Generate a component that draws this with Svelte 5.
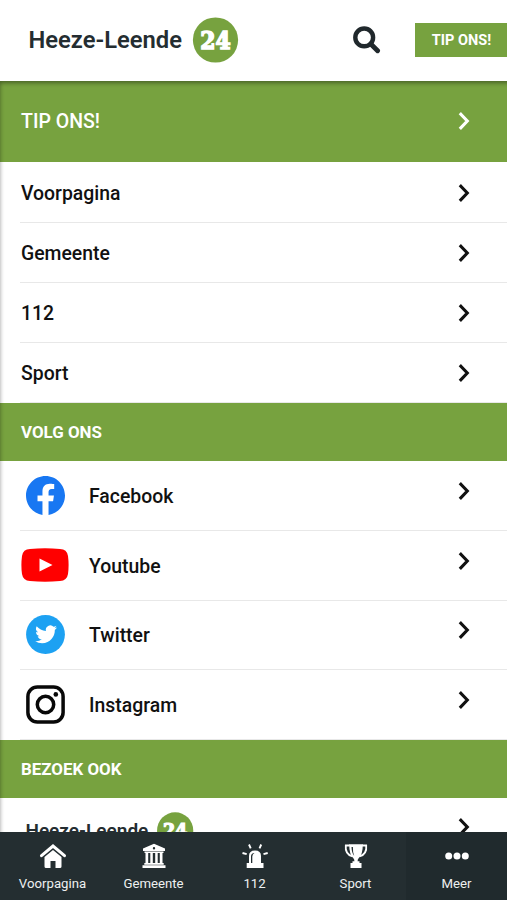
<script>
  const pages = ['Voorpagina', 'Gemeente', '112', 'Sport'];
  const socials = ['Facebook', 'Youtube', 'Twitter', 'Instagram'];
  const tabs = ['Voorpagina', 'Gemeente', '112', 'Sport', 'Meer'];
</script>

{#snippet chevron()}
  <svg class="chevron" width="12" height="18" viewBox="0 0 12 18" aria-hidden="true">
    <path d="m2.9 2.3 6.4 6.7-6.4 6.7" fill="none" stroke="currentColor" stroke-width="3.1" stroke-linecap="square" />
  </svg>
{/snippet}

{#snippet logo(width)}
  <svg class="logo" {width} height={width * 46 / 211} viewBox="0 0 211 46" role="img" aria-label="Heeze-Leende 24">
    <text x="0.5" y="31" textLength="153.5" lengthAdjust="spacingAndGlyphs" font-size="24" font-weight="600" fill="#242d31">Heeze-Leende</text>
    <circle cx="187.5" cy="23" r="22.6" fill="#77a23f" />
    <text class="number" x="172.3" y="31.5" textLength="30.5" lengthAdjust="spacingAndGlyphs" font-size="23.5" font-weight="bold" fill="#fff" stroke="#fff" stroke-width="1.5">24</text>
  </svg>
{/snippet}

<div class="app">
  <header>
    {@render logo(211)}
    <svg class="search" width="28" height="28" viewBox="0 0 28 28" aria-label="Zoeken">
      <circle cx="11.2" cy="11.4" r="8.9" fill="none" stroke="#20282c" stroke-width="4.4" />
      <path d="m17.8 18 6.8 6.8" stroke="#20282c" stroke-width="4.8" stroke-linecap="round" />
    </svg>
    <button>TIP ONS!</button>
  </header>

  <main>
    <div class="tip"><span>TIP ONS!</span>{@render chevron()}</div>
    {#each pages as page}
      <div class="row"><span>{page}</span>{@render chevron()}</div>
    {/each}

    <h2>VOLG ONS</h2>
    {#each socials as social}
      <div class="row social">
        <div class="brand">
          {#if social === 'Facebook'}
            <svg width="39" height="39" viewBox="0 0 24 24"><path fill="#1877f2" d="M24 12.07C24 5.4 18.63 0 12 0S0 5.4 0 12.07c0 6.03 4.39 11.02 10.13 11.93v-8.44H7.08v-3.49h3.05V9.41c0-3.02 1.79-4.69 4.53-4.69 1.31 0 2.69.24 2.69.24v2.97h-1.52c-1.49 0-1.96.93-1.96 1.89v2.25h3.33l-.53 3.49h-2.8V24C19.61 23.09 24 18.1 24 12.07z" /></svg>
          {:else if social === 'Youtube'}
            <svg width="48" height="34" viewBox="0 0 48 34"><path fill="#f00" d="M9 1Q24-.7 39 1q7 .2 8 7 1.2 9 0 18-1 6.5-8 7-15 1.5-30 0-7-.5-8-7-1.2-9 0-18 1-6.8 8-7z" /><path d="m18.5 10.5 13 6.5-13 6.5z" fill="#fff" /></svg>
          {:else if social === 'Twitter'}
            <svg width="39" height="39" viewBox="0 0 39 39"><circle cx="19.5" cy="19.5" r="19.4" fill="#1da1f2" /><path transform="translate(9.2 8.4) scale(.91)" fill="#fff" d="M23.95 4.57a10 10 0 0 1-2.82.78 4.96 4.96 0 0 0 2.16-2.73c-.95.56-2 .96-3.13 1.19a4.92 4.92 0 0 0-8.38 4.48C7.69 8.1 4.07 6.13 1.64 3.16a4.92 4.92 0 0 0 1.52 6.57 4.9 4.9 0 0 1-2.23-.61v.06a4.92 4.92 0 0 0 3.95 4.83 5 5 0 0 1-2.21.08 4.94 4.94 0 0 0 4.6 3.42A9.87 9.87 0 0 1 0 19.54a13.99 13.99 0 0 0 7.55 2.21c9.06 0 14.01-7.5 14.01-13.98 0-.21 0-.42-.02-.63A9.94 9.94 0 0 0 24 4.59z" /></svg>
          {:else}
            <svg width="39" height="39" viewBox="0 0 39 39" fill="none" stroke="#080808" stroke-width="3.5"><rect x="1.9" y="1.9" width="35.2" height="35.2" rx="9.5" /><circle cx="19.5" cy="19.5" r="8.2" /><circle cx="29.8" cy="9.4" r="2.3" fill="#080808" stroke="none" /></svg>
          {/if}
        </div>
        <span>{social}</span>{@render chevron()}
      </div>
    {/each}

    <h2>BEZOEK OOK</h2>
    <div class="row visit">{@render logo(169)}{@render chevron()}</div>
  </main>

  <nav>
    {#each tabs as tab}
      <div class="tab" class:active={tab === 'Meer'}>
        <svg width="28" height="26" viewBox="0 0 28 26" fill="#fff" aria-hidden="true">
          {#if tab === 'Voorpagina'}
            <path d="M2.5 12.7 14 3l11.5 9.7" fill="none" stroke="#fff" stroke-width="3" stroke-linecap="round" stroke-linejoin="miter" />
            <path d="m14 7 8.500 7v9.500q0 1.500-1.500 1.500h-4.500v-7h-5v7H7q-1.500 0-1.500-1.500V14z" />
          {:else if tab === 'Gemeente'}
            <path fill-rule="evenodd" d="M14 .8 25 5.500V8H3V5.500zm0 3.200a1.2 1.2 0 1 0 0 2.4A1.2 1.2 0 0 0 14 4z" />
            <path d="M4.500 8.500h19V10h-19zM5.500 9.500h2.700v11H5.500zm4.800 0h2.500v11h-2.500zm4.900 0h2.500v11h-2.500zm4.600 0h2.700v11h-2.700zM4.300 20h19.400v1.700H4.300zM2.500 22.300h23V25h-23z" />
          {:else if tab === '112'}
            <path fill-rule="evenodd" d="M8 20v-7q0-5.500 6-5.500t6 5.500v7zm2 0h1.300v-6.500q0-2.600 2.200-3.600-3.500 0-3.500 3.600z" />
            <path d="M5.700 20h16.800v5H5.700z" />
            <path d="m8 1.500 1.700 3.800m10.500-3.800-1.700 3.800M1.500 10l4.200 1.200M26.700 10l-4.200 1.200" fill="none" stroke="#fff" stroke-width="1.9" />
          {:else if tab === 'Sport'}
            <path fill-rule="evenodd" d="M7.200 1.300h13.600q0 10.500-4 13.800-1.300 1-1.300 3.800h-3q0-2.800-1.300-3.800-4-3.300-4-13.800zM9.500 4q.2 6 2.700 9-1.500-4-1.300-9z" />
            <path d="M10.500 18.300h7v2.500h-7zM8.500 20h11v5h-11z" />
            <path d="M8 2.500H3.800Q2.800 11 10.500 13.500M20 2.500h4.200q1 8.500-6.700 11" fill="none" stroke="#fff" stroke-width="1.8" />
          {:else}
            <circle cx="5.7" cy="13" r="3.5" /><circle cx="14" cy="13" r="3.5" /><circle cx="22.3" cy="13" r="3.5" />
          {/if}
        </svg>
        <span>{tab}</span>
      </div>
    {/each}
  </nav>
</div>

<style>
  :global(body) { margin: 0; }
  * { box-sizing: border-box; }
  .app { width: 507px; height: 900px; display: flex; flex-direction: column; overflow: hidden; background: #fff; font-family: Roboto, sans-serif; color: #111; }
  svg { display: block; flex: none; }
  header { height: 81px; flex: none; display: flex; align-items: center; padding: 0 0 2px 28px; background: #fff; }
  .number { font-family: "DejaVu Serif", serif; }
  .search { margin-left: 114px; }
  button { margin: 0 0 0 auto; width: 92px; height: 34px; padding: 1px 0 0 1px; border: 0; background: #77a23f; color: #fff; font: 700 14.5px/33px Roboto, sans-serif; white-space: nowrap; }
  main { flex: 1; min-height: 0; overflow: hidden; position: relative; }
  main::before { content: ''; position: absolute; top: 0; right: -8px; left: -1px; z-index: 1; height: 900px; box-shadow: inset 1px 2px 4px rgb(0 0 0 / .4); pointer-events: none; }
  .tip { height: 81px; padding: 0 37px 0 21px; display: flex; align-items: center; background: #77a23f; color: #fff; font-size: 19.5px; font-weight: 500; }
  .tip .chevron { margin-bottom: 1px; }
  .row { height: 60px; margin-left: 20px; padding: 1px 37px 0 1px; display: flex; align-items: center; border-bottom: 1.5px solid #e8e8e8; font-size: 19.4px; font-weight: 500; }
  .tip + .row { height: 61px; padding-top: 2px; }
  .chevron { margin-left: auto; }
  h2 { margin: 0; height: 58px; padding-left: 21px; background: #77a23f; color: #fff; font-size: 16.9px; line-height: 59px; font-weight: 700; }
  .social { height: 69.75px; padding-top: 2px; }
  .brand { width: 48px; margin: 0 20px 2px 0; display: flex; justify-content: center; }
  .social .chevron { margin-bottom: 11px; }
  .visit { height: 70px; padding-left: 5px; align-items: flex-start; padding-top: 14px; }
  .visit .chevron { margin-top: 6px; }
  nav { height: 68px; flex: none; display: flex; background: #242e31; color: #eef0f0; padding-left: 2px; }
  .tab { flex: 1; display: flex; flex-direction: column; align-items: center; padding-top: 11px; font-size: 13.2px; line-height: 18px; }
  .tab span { margin-top: 6px; }
  .active { background: #202a2d; }
</style>
